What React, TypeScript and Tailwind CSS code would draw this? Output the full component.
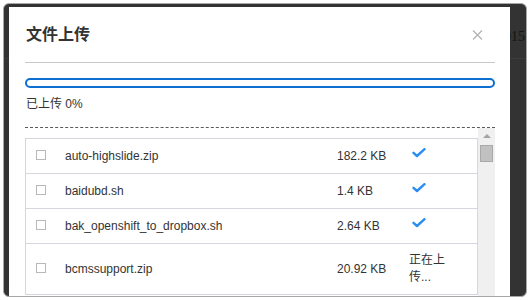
import React from 'react';

type FileItem = { name: string; size: string; done: boolean };

const files: FileItem[] = [
  { name: 'auto-highslide.zip', size: '182.2 KB', done: true },
  { name: 'baidubd.sh', size: '1.4 KB', done: true },
  { name: 'bak_openshift_to_dropbox.sh', size: '2.64 KB', done: true },
  { name: 'bcmssupport.zip', size: '20.92 KB', done: false },
];

function CheckMark() {
  return (
    <svg width="14" height="10" viewBox="0 0 14 10" className="block">
      <path d="M1.5 4.8 L5 8 L12.5 1.2" fill="none" stroke="#2b8ef0" strokeWidth="2.4" strokeLinecap="round" strokeLinejoin="round" />
    </svg>
  );
}

function FileRow({ file }: { file: FileItem }) {
  return (
    <div className="flex items-center min-h-[35px] border-b border-[#d6d6de] py-2 leading-[17px] text-[12px] text-[#333]">
      <div className="w-[39px] shrink-0 pl-[10px] mb-[3px]">
        <span className="block w-[10px] h-[10px] border border-[#b8b8b8] bg-white" />
      </div>
      <div className="flex-1 truncate">{file.name}</div>
      <div className="w-[72px] shrink-0">{file.size}</div>
      <div className="w-[44px] shrink-0">
        {file.done ? (
          <div className="pl-[3px] mb-[6px]"><CheckMark /></div>
        ) : (
          <span>正在上传...</span>
        )}
      </div>
      <div className="w-[24px] shrink-0" />
    </div>
  );
}

export default function App() {
  return (
    <div className="w-[530px] h-[300px] bg-white pl-[3px] pt-[3px] font-['Liberation_Sans','Noto_Sans_CJK_SC',sans-serif]">
      <div className="relative w-[524px] h-[294px] rounded-[6px] border border-[#a8a8a8] bg-[#333] overflow-hidden pl-[5px] pt-[3px] pr-[16px]">
        {/* page behind the dialog */}
        <div className="absolute left-0 right-0 top-[54px] h-px bg-[#3d3d3d]" />
        <span className="absolute left-[493px] top-[22px] text-[14px] text-[#151515] font-['Liberation_Serif',serif]">2015</span>

        <div className="relative z-10 h-full bg-white pl-[16px] pr-[15px] flex flex-col">
          {/* header */}
          <div className="flex items-center justify-between border-b border-[#c8c8c8] pt-[17px] pb-[16px]">
            <h2 className="text-[16px] leading-[22px] font-bold text-[#333] pl-[1px]">文件上传</h2>
            <button className="mr-[12px] text-[#b0b0b0]">
              <svg width="11" height="10" viewBox="0 0 11 10" className="block">
                <path d="M1 0.5 L10 9.5 M10 0.5 L1 9.5" stroke="#b3b3b3" strokeWidth="1.3" />
              </svg>
            </button>
          </div>

          {/* progress */}
          <div className="mt-[15px] h-[10px] rounded-full border-2 border-[#0c6fd1]" />
          <p className="mt-[8px] text-[12px] leading-[17px] text-[#333] pl-[1px]">已上传 0%</p>
          <div className="mt-[14px] border-t border-dashed border-[#5a5a5a]" />

          {/* file list */}
          <div className="flex flex-1 min-h-0">
            <div className="flex-1 overflow-hidden pt-[10px]">
              <div className="border-l border-t border-r border-[#d6d6de]">
                {files.map((f) => (
                  <FileRow key={f.name} file={f} />
                ))}
              </div>
            </div>
            <div className="w-[17px] shrink-0 bg-[#f0f0f0] flex flex-col items-center pt-[6px]">
              <span className="block w-0 h-0 border-l-[4px] border-r-[4px] border-b-[4px] border-l-transparent border-r-transparent border-b-[#a3a3a3]" />
              <span className="block mt-[7px] w-[13px] h-[17px] bg-[#c1c1c1] border border-[#a9a9a9]" />
            </div>
          </div>
        </div>
      </div>
    </div>
  );
}
